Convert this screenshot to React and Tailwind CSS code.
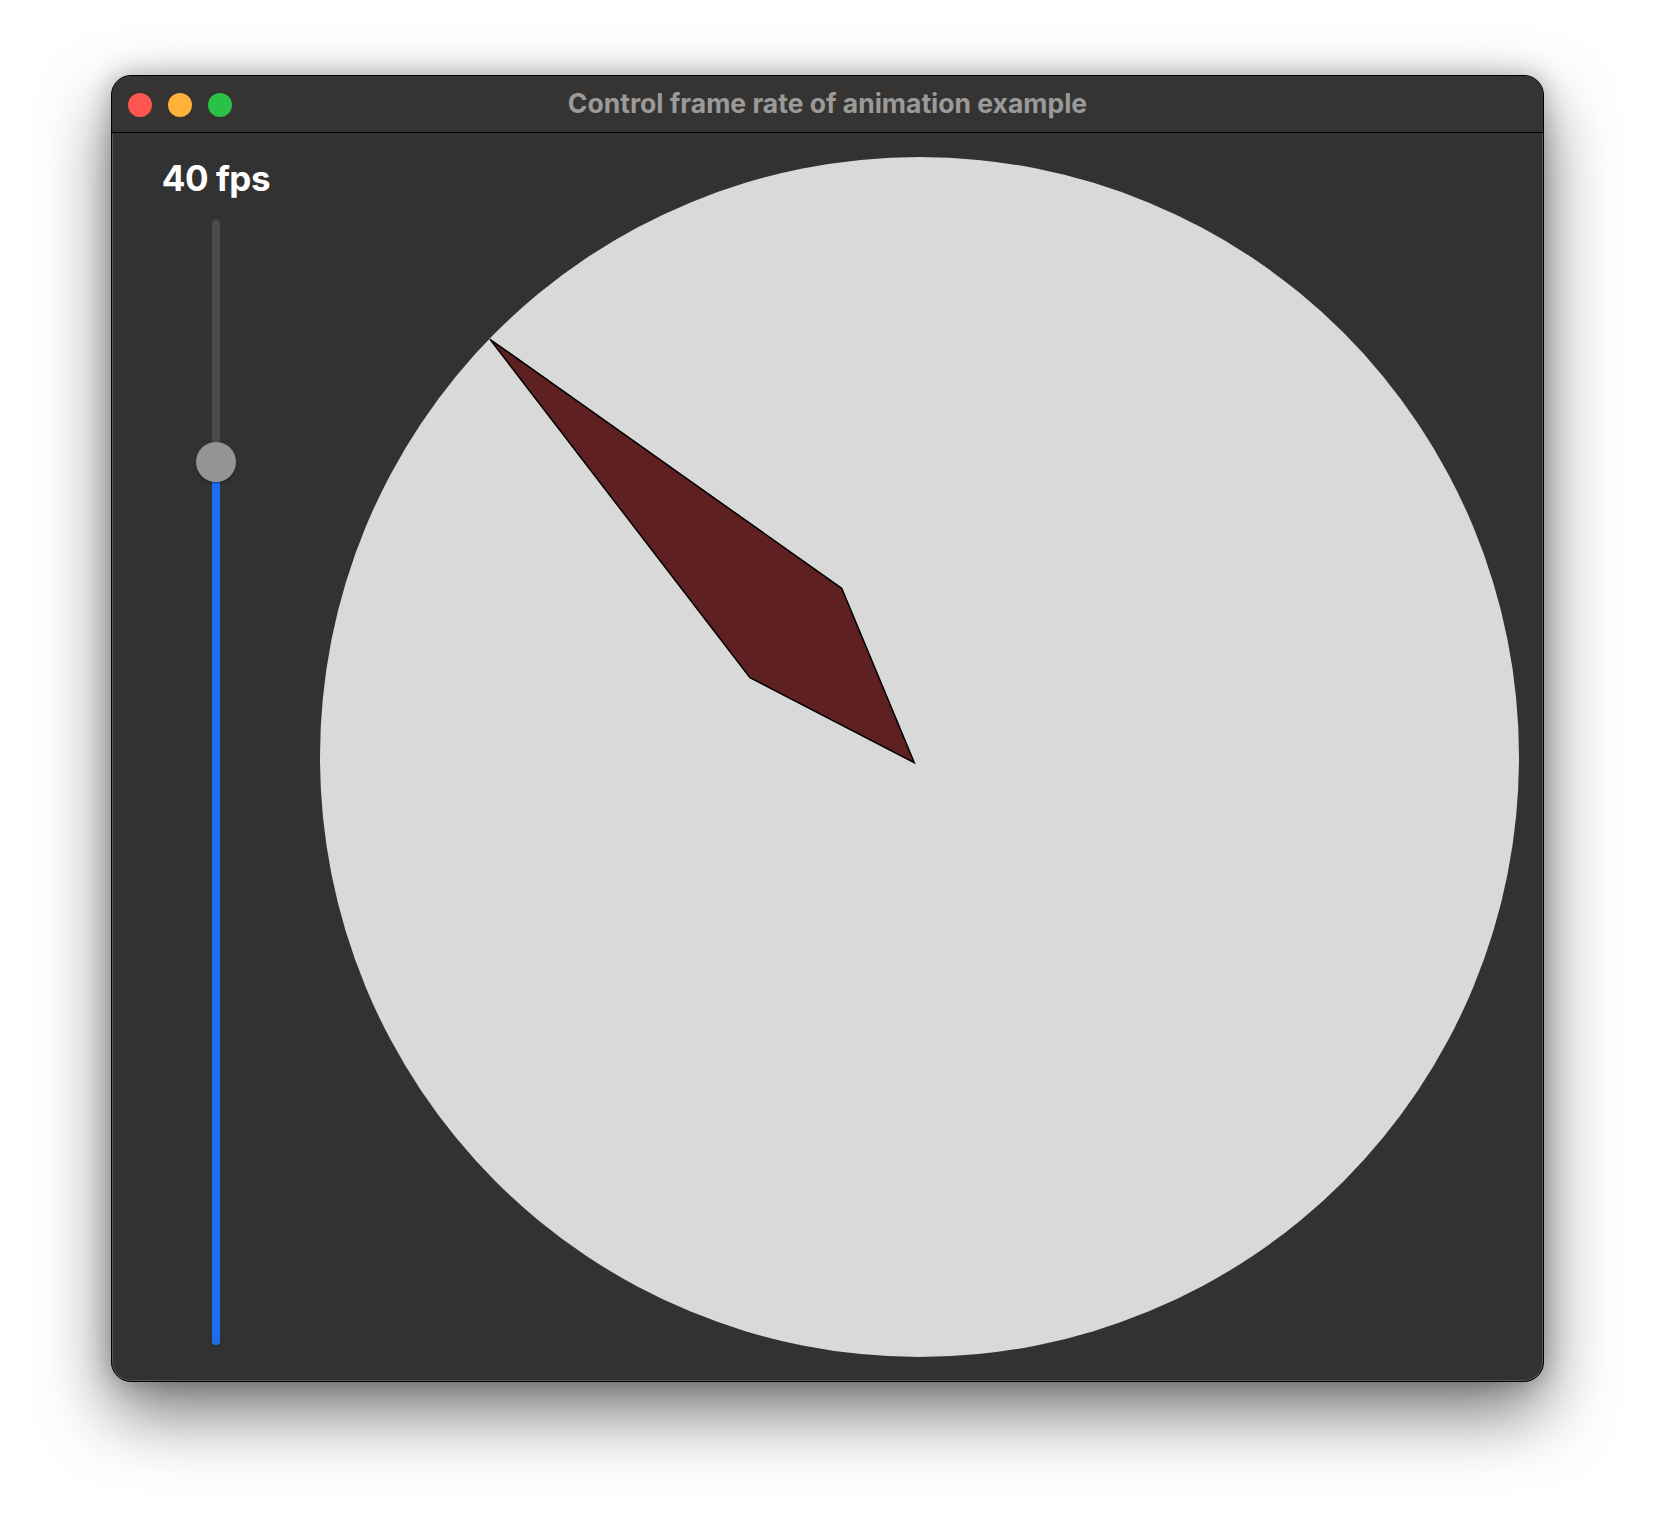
import React from 'react';

// Window chrome dots
function TrafficLights() {
    return (
        <div className="absolute left-[16px] top-[17px] flex gap-4">
            <div className="w-6 h-6 rounded-full bg-[#fe5650]" />
            <div className="w-6 h-6 rounded-full bg-[#feb23a]" />
            <div className="w-6 h-6 rounded-full bg-[#2ac146]" />
        </div>
    );
}

// Vertical fps slider
function FpsSlider({ value }) {
    const fill = `${value}%`;
    return (
        <div className="flex flex-col items-center w-[160px] pt-1 pb-3">
            <div className="text-white text-[35px] leading-none font-bold tracking-[-0.5px]">40 fps</div>
            <div className="relative mt-6 flex-1 w-2 rounded-full bg-[#4a4a4a]">
                <div className="absolute bottom-0 left-0 w-2 rounded-b-full bg-[#1b6ded]" style={{ height: fill }} />
                <div
                    className="absolute left-1/2 -translate-x-1/2 translate-y-1/2 w-10 h-10 rounded-full bg-[#979593] shadow-[0_1px_2px_rgba(0,0,0,0.4)]"
                    style={{ bottom: fill }}
                />
            </div>
        </div>
    );
}

// Clock face with the spinning hand
function Dial() {
    return (
        <div className="relative w-[1200px] h-[1200px] rounded-full bg-[#d9d9d9]">
            <svg className="absolute inset-0" width="1200" height="1200" viewBox="0 0 1200 1200">
                <polygon
                    points="170,182.3 521.7,431.3 594.3,605.7 430,520.7"
                    fill="#5f2022"
                    stroke="#000"
                    strokeWidth="1.5"
                    strokeLinejoin="miter"
                />
            </svg>
        </div>
    );
}

export default function App() {
    return (
        <div className="w-[1656px] h-[1530px] bg-white pt-[75px] pl-[111px]" style={{ fontFamily: 'Inter, "Noto Sans", sans-serif' }}>
            <div className="w-[1433px] h-[1307px] rounded-[20px] border border-black bg-[#323232] overflow-hidden flex flex-col shadow-[0_30px_70px_rgba(0,0,0,0.55),0_0_25px_rgba(0,0,0,0.25),inset_0_0_0_1px_rgba(255,255,255,0.18)]">
                {/* Title bar */}
                <div className="relative h-[57px] shrink-0 bg-[#353433] border-b border-black flex items-center justify-center">
                    <TrafficLights />
                    <div className="text-[#9b9a99] text-[26.5px] font-bold tracking-[0px]">Control frame rate of animation example</div>
                </div>

                {/* Content */}
                <div className="flex-1 flex pl-6 pr-6 pt-6 pb-6 gap-6">
                    <FpsSlider value={78.5} />
                    <Dial />
                </div>
            </div>
        </div>
    );
}
